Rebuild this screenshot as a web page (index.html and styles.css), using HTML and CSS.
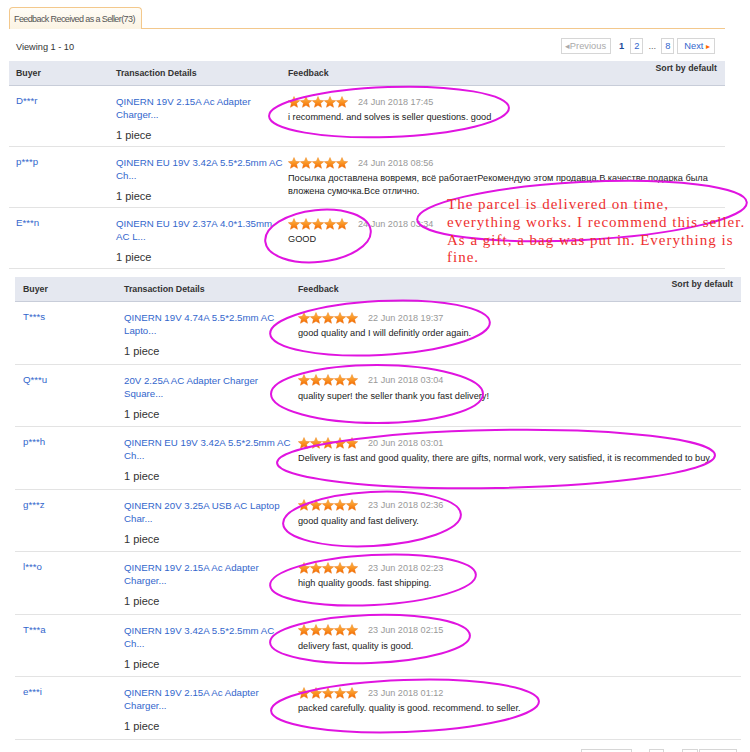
FILE: index.html
```html
<!DOCTYPE html>
<html>
<head>
<meta charset="utf-8">
<link rel="stylesheet" href="styles.css">
</head>
<body>
<svg width="0" height="0" class="defs">
  <defs>
    <linearGradient id="sg" x1="0" y1="0" x2="0" y2="1">
      <stop offset="0" stop-color="#ffc04a"/>
      <stop offset="1" stop-color="#f46800"/>
    </linearGradient>
    <symbol id="star" viewBox="0 0 24 24">
      <path d="M12 1L15.23 8.55L23.41 9.29L17.23 14.7L19.05 22.71L12 18.5L4.95 22.71L6.77 14.7L0.59 9.29L8.77 8.55Z" fill="url(#sg)" stroke="#e86a00" stroke-width="0.8" stroke-linejoin="round"/>
    </symbol>
  </defs>
</svg>
<div class="page">
  <section class="shot shot1">
    <div class="tabs"><div class="tab">Feedback Received as a Seller(73)</div></div>
    <div class="toolbar">
      <div class="viewing">Viewing 1 - 10</div>
      <div class="pager">
        <span class="pbtn prev">&#9666;Previous</span>
        <span class="pcur">1</span>
        <span class="pbtn">2</span>
        <span class="pdots">...</span>
        <span class="pbtn">8</span>
        <span class="pbtn next">Next <i>&#9656;</i></span>
      </div>
    </div>
    <div class="table">
      <div class="thead"><div class="c1">Buyer</div><div class="c2">Transaction Details</div><div class="c3">Feedback</div><div class="sort">Sort by default</div></div>
      <div class="row">
        <div class="c1 buyer">D***r</div>
        <div class="c2"><div class="prod">QINERN 19V 2.15A Ac Adapter Charger...</div><div class="qty">1 piece</div></div>
        <div class="c3"><div class="meta"><svg class="stars" viewBox="0 0 60 12"><use href="#star" x="0" width="12" height="12"/><use href="#star" x="12" width="12" height="12"/><use href="#star" x="24" width="12" height="12"/><use href="#star" x="36" width="12" height="12"/><use href="#star" x="48" width="12" height="12"/></svg><span class="date">24 Jun 2018 17:45</span></div><div class="fb">i recommend. and solves is seller questions. good</div></div>
      </div>
      <div class="row">
        <div class="c1 buyer">p***p</div>
        <div class="c2"><div class="prod">QINERN EU 19V 3.42A 5.5*2.5mm AC Ch...</div><div class="qty">1 piece</div></div>
        <div class="c3"><div class="meta"><svg class="stars" viewBox="0 0 60 12"><use href="#star" x="0" width="12" height="12"/><use href="#star" x="12" width="12" height="12"/><use href="#star" x="24" width="12" height="12"/><use href="#star" x="36" width="12" height="12"/><use href="#star" x="48" width="12" height="12"/></svg><span class="date">24 Jun 2018 08:56</span></div><div class="fb">Посылка доставлена вовремя, всё работаетРекомендую этом продавца.В качестве подарка была вложена сумочка.Все отлично.</div></div>
      </div>
      <div class="row">
        <div class="c1 buyer">E***n</div>
        <div class="c2"><div class="prod">QINERN EU 19V 2.37A 4.0*1.35mm AC L...</div><div class="qty">1 piece</div></div>
        <div class="c3"><div class="meta"><svg class="stars" viewBox="0 0 60 12"><use href="#star" x="0" width="12" height="12"/><use href="#star" x="12" width="12" height="12"/><use href="#star" x="24" width="12" height="12"/><use href="#star" x="36" width="12" height="12"/><use href="#star" x="48" width="12" height="12"/></svg><span class="date">24 Jun 2018 03:34</span></div><div class="fb">GOOD</div></div>
      </div>
    </div>
  </section>

  <section class="shot shot2">
    <div class="table">
      <div class="thead"><div class="c1">Buyer</div><div class="c2">Transaction Details</div><div class="c3">Feedback</div><div class="sort">Sort by default</div></div>
      <div class="row">
        <div class="c1 buyer">T***s</div>
        <div class="c2"><div class="prod">QINERN 19V 4.74A 5.5*2.5mm AC Lapto...</div><div class="qty">1 piece</div></div>
        <div class="c3"><div class="meta"><svg class="stars" viewBox="0 0 60 12"><use href="#star" x="0" width="12" height="12"/><use href="#star" x="12" width="12" height="12"/><use href="#star" x="24" width="12" height="12"/><use href="#star" x="36" width="12" height="12"/><use href="#star" x="48" width="12" height="12"/></svg><span class="date">22 Jun 2018 19:37</span></div><div class="fb">good quality and I will definitly order again.</div></div>
      </div>
      <div class="row">
        <div class="c1 buyer">Q***u</div>
        <div class="c2"><div class="prod">20V 2.25A AC Adapter Charger Square...</div><div class="qty">1 piece</div></div>
        <div class="c3"><div class="meta"><svg class="stars" viewBox="0 0 60 12"><use href="#star" x="0" width="12" height="12"/><use href="#star" x="12" width="12" height="12"/><use href="#star" x="24" width="12" height="12"/><use href="#star" x="36" width="12" height="12"/><use href="#star" x="48" width="12" height="12"/></svg><span class="date">21 Jun 2018 03:04</span></div><div class="fb">quality super! the seller thank you fast delivery!</div></div>
      </div>
      <div class="row">
        <div class="c1 buyer">p***h</div>
        <div class="c2"><div class="prod">QINERN EU 19V 3.42A 5.5*2.5mm AC Ch...</div><div class="qty">1 piece</div></div>
        <div class="c3"><div class="meta"><svg class="stars" viewBox="0 0 60 12"><use href="#star" x="0" width="12" height="12"/><use href="#star" x="12" width="12" height="12"/><use href="#star" x="24" width="12" height="12"/><use href="#star" x="36" width="12" height="12"/><use href="#star" x="48" width="12" height="12"/></svg><span class="date">20 Jun 2018 03:01</span></div><div class="fb">Delivery is fast and good quality, there are gifts, normal work, very satisfied, it is recommended to buy.</div></div>
      </div>
      <div class="row">
        <div class="c1 buyer">g***z</div>
        <div class="c2"><div class="prod">QINERN 20V 3.25A USB AC Laptop Char...</div><div class="qty">1 piece</div></div>
        <div class="c3"><div class="meta"><svg class="stars" viewBox="0 0 60 12"><use href="#star" x="0" width="12" height="12"/><use href="#star" x="12" width="12" height="12"/><use href="#star" x="24" width="12" height="12"/><use href="#star" x="36" width="12" height="12"/><use href="#star" x="48" width="12" height="12"/></svg><span class="date">23 Jun 2018 02:36</span></div><div class="fb">good quality and fast delivery.</div></div>
      </div>
      <div class="row">
        <div class="c1 buyer">l***o</div>
        <div class="c2"><div class="prod">QINERN 19V 2.15A Ac Adapter Charger...</div><div class="qty">1 piece</div></div>
        <div class="c3"><div class="meta"><svg class="stars" viewBox="0 0 60 12"><use href="#star" x="0" width="12" height="12"/><use href="#star" x="12" width="12" height="12"/><use href="#star" x="24" width="12" height="12"/><use href="#star" x="36" width="12" height="12"/><use href="#star" x="48" width="12" height="12"/></svg><span class="date">23 Jun 2018 02:23</span></div><div class="fb">high quality goods. fast shipping.</div></div>
      </div>
      <div class="row">
        <div class="c1 buyer">T***a</div>
        <div class="c2"><div class="prod">QINERN 19V 3.42A 5.5*2.5mm AC Ch...</div><div class="qty">1 piece</div></div>
        <div class="c3"><div class="meta"><svg class="stars" viewBox="0 0 60 12"><use href="#star" x="0" width="12" height="12"/><use href="#star" x="12" width="12" height="12"/><use href="#star" x="24" width="12" height="12"/><use href="#star" x="36" width="12" height="12"/><use href="#star" x="48" width="12" height="12"/></svg><span class="date">23 Jun 2018 02:15</span></div><div class="fb">delivery fast, quality is good.</div></div>
      </div>
      <div class="row">
        <div class="c1 buyer">e***i</div>
        <div class="c2"><div class="prod">QINERN 19V 2.15A Ac Adapter Charger...</div><div class="qty">1 piece</div></div>
        <div class="c3"><div class="meta"><svg class="stars" viewBox="0 0 60 12"><use href="#star" x="0" width="12" height="12"/><use href="#star" x="12" width="12" height="12"/><use href="#star" x="24" width="12" height="12"/><use href="#star" x="36" width="12" height="12"/><use href="#star" x="48" width="12" height="12"/></svg><span class="date">23 Jun 2018 01:12</span></div><div class="fb">packed carefully. quality is good. recommend. to seller.</div></div>
      </div>
    </div>
    <div class="pager2"><span class="b b1"></span><span class="b b2"></span><span class="b b3"></span><span class="b b4"></span></div>
  </section>

  <svg class="marks" width="750" height="752" viewBox="0 0 750 752">
    <g fill="none" stroke="#e014e0" stroke-width="2">
      <ellipse cx="389" cy="112" rx="120" ry="25" transform="rotate(-2 389 112)"/>
      <ellipse cx="318" cy="236" rx="53" ry="26" transform="rotate(-6 318 236)"/>
      <ellipse cx="582" cy="211" rx="165" ry="29" transform="rotate(-3 582 211)"/>
      <ellipse cx="380" cy="328" rx="110" ry="27" transform="rotate(-3 380 328)"/>
      <ellipse cx="377" cy="394" rx="106" ry="29"/>
      <ellipse cx="496" cy="459" rx="219" ry="29" transform="rotate(-1 496 459)"/>
      <ellipse cx="372" cy="519" rx="89" ry="27" transform="rotate(-3 372 519)"/>
      <ellipse cx="373" cy="580" rx="103" ry="25" transform="rotate(-3 373 580)"/>
      <ellipse cx="370" cy="639" rx="100" ry="24" transform="rotate(-2 370 639)"/>
      <ellipse cx="405" cy="706" rx="134" ry="26" transform="rotate(-2 405 706)"/>
    </g>
  </svg>
  <div class="note">The parcel is delivered on time,<br>everything works. I recommend this seller.<br>As a gift, a bag was put in. Everything is<br>fine.</div>
</div>
</body>
</html>
```
FILE: styles.css
```css
html, body { margin: 0; padding: 0; background: #fff; }
body { font-family: "Liberation Sans", Arial, sans-serif; color: #333; }
.defs { position: absolute; }
.page { position: relative; width: 750px; height: 752px; overflow: hidden; }

.shot1 { height: 270px; overflow: hidden; padding-left: 9px; width: 716px; }
.tabs { padding-top: 6px; border-bottom: 1px solid #f3c88c; height: 22px; }
.tab {
  display: inline-block; height: 22px; box-sizing: border-box;
  border: 1px solid #f3c88c; border-bottom: none; border-radius: 4px 4px 0 0;
  background: linear-gradient(#fffdf7, #fbf3e3); white-space: nowrap;
  font-size: 9px; letter-spacing: -0.6px; color: #555; line-height: 22px; padding: 0 6px 0 4px;
  position: relative; top: 1px;
}
.toolbar { display: flex; justify-content: space-between; align-items: center; height: 32px; }
.viewing { font-size: 9.2px; color: #333; padding-left: 7px; padding-top: 4px; }
.pager { display: flex; align-items: center; gap: 3px; font-size: 9.3px; margin-right: 10px; padding-top: 2px; }
.pbtn { border: 1px solid #d6d6d6; padding: 0 3px; height: 14px; line-height: 14px; color: #3366cc; background: #fff; }
.prev { color: #aaa; padding: 0 4px 0 3px; }
.next { padding: 0 4px 0 6px; }
.next i { color: #f60; font-style: normal; font-size: 8px; }
.pcur { color: #1d4a99; font-weight: bold; padding: 0 3px 0 5px; }
.pdots { color: #666; padding: 0 2px; }

.table { width: 716px; }
.thead {
  display: flex; height: 24px; background: #e5e8f0; border-bottom: 1px solid #c8cdd9;
  font-size: 8.8px; font-weight: bold; color: #333; line-height: 24px; position: relative;
}
.thead .sort { position: absolute; right: 8px; top: -5px; font-size: 8.8px; }
.c1 { width: 100px; padding-left: 7px; flex: none; }
.c2 { width: 172px; flex: none; }
.c3 { flex: 1; }
.row { display: flex; height: 61px; border-bottom: 1px solid #e3e3e3; box-sizing: border-box; padding-top: 9px; font-size: 9.7px; }
.buyer { color: #3366cc; }
.prod { color: #3366cc; line-height: 13px; width: 170px; }
.qty { font-size: 11px; color: #333; margin-top: 8px; }
.meta { display: flex; align-items: center; height: 13px; }
.stars { width: 60px; height: 12px; flex: none; }
.date { color: #999; margin-left: 10px; font-size: 9.1px; }
.fb { color: #222; font-size: 9.2px; line-height: 13px; margin-top: 3px; width: 420px; }

.shot2 { padding-top: 7px; padding-left: 15px; width: 726px; }
.shot2 .table { width: 726px; }
.shot2 .c1 { width: 101px; padding-left: 8px; }
.shot2 .c2 { width: 174px; }
.shot2 .row { height: 62.5px; }
.shot2 .fb { width: 440px; }
.pager2 { position: relative; height: 20px; }
.pager2 .b { position: absolute; top: 9px; height: 12px; border: 1px solid #d6d6d6; border-bottom: none; }
.b1 { left: 566px; width: 49px; }
.b2 { left: 634px; width: 13px; }
.b3 { left: 667px; width: 14px; }
.b4 { left: 684px; width: 36px; }

.marks { position: absolute; left: 0; top: 0; pointer-events: none; }
.note {
  position: absolute; left: 447px; top: 196px;
  font-family: "Liberation Serif", "Times New Roman", serif; font-size: 15px; line-height: 17.8px;
  color: #ee3030; letter-spacing: 1px; white-space: nowrap;
}
```
